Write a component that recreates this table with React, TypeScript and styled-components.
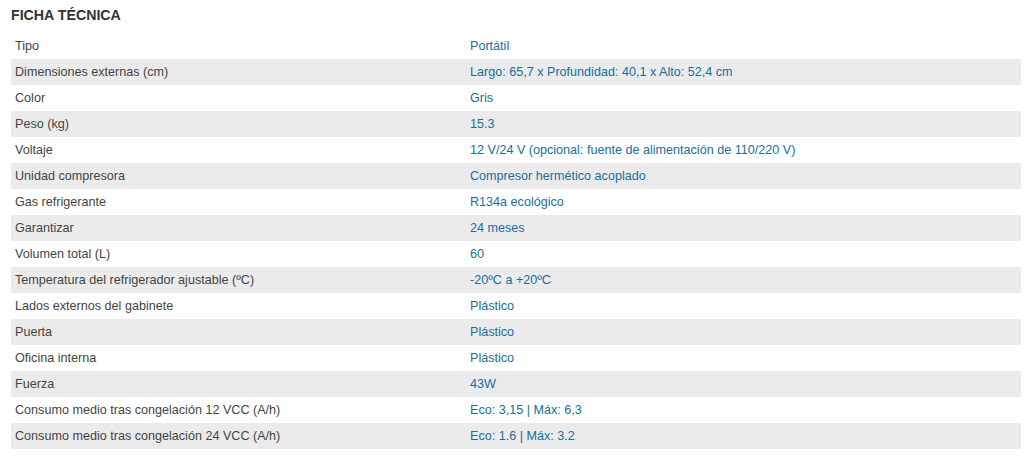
import React from "react";
import styled, { createGlobalStyle } from "styled-components";

const Global = createGlobalStyle`
  html, body { margin: 0; padding: 0; background: #fff; }
  body { font-family: "Liberation Sans", Arial, sans-serif; }
`;

const Page = styled.div`
  padding: 6px 13px 0 11px;
`;

const Title = styled.h2`
  margin: 0 0 9px 0;
  font-size: 14.2px;
  line-height: 18px;
  font-weight: bold;
  color: #333;
  text-transform: uppercase;
`;

const Table = styled.table`
  width: 1010px;
  border-collapse: collapse;
  font-size: 12.6px;
`;

const Row = styled.tr<{ $alt: boolean }>`
  height: 26px;
  background: ${(p) => (p.$alt ? "#ebebeb" : "#fff")};
`;

const Label = styled.td`
  width: 447px;
  padding: 0 4px;
  color: #444;
  vertical-align: middle;
`;

const Value = styled.td`
  padding: 0 4px;
  color: #1a6d9c;
  vertical-align: middle;
`;

const rows: [string, string][] = [
  ["Tipo", "Portátil"],
  ["Dimensiones externas (cm)", "Largo: 65,7 x Profundidad: 40,1 x Alto: 52,4 cm"],
  ["Color", "Gris"],
  ["Peso (kg)", "15.3"],
  ["Voltaje", "12 V/24 V (opcional: fuente de alimentación de 110/220 V)"],
  ["Unidad compresora", "Compresor hermético acoplado"],
  ["Gas refrigerante", "R134a ecológico"],
  ["Garantizar", "24 meses"],
  ["Volumen total (L)", "60"],
  ["Temperatura del refrigerador ajustable (ºC)", "-20ºC a +20ºC"],
  ["Lados externos del gabinete", "Plástico"],
  ["Puerta", "Plástico"],
  ["Oficina interna", "Plástico"],
  ["Fuerza", "43W"],
  ["Consumo medio tras congelación 12 VCC (A/h)", "Eco: 3,15 | Máx: 6,3"],
  ["Consumo medio tras congelación 24 VCC (A/h)", "Eco: 1.6 | Máx: 3.2"],
];

export default function App() {
  return (
    <>
      <Global />
      <Page>
        <Title>Ficha técnica</Title>
        <Table>
          <tbody>
            {rows.map(([l, v], i) => (
              <Row key={l} $alt={i % 2 === 1}>
                <Label>{l}</Label>
                <Value>{v}</Value>
              </Row>
            ))}
          </tbody>
        </Table>
      </Page>
    </>
  );
}
